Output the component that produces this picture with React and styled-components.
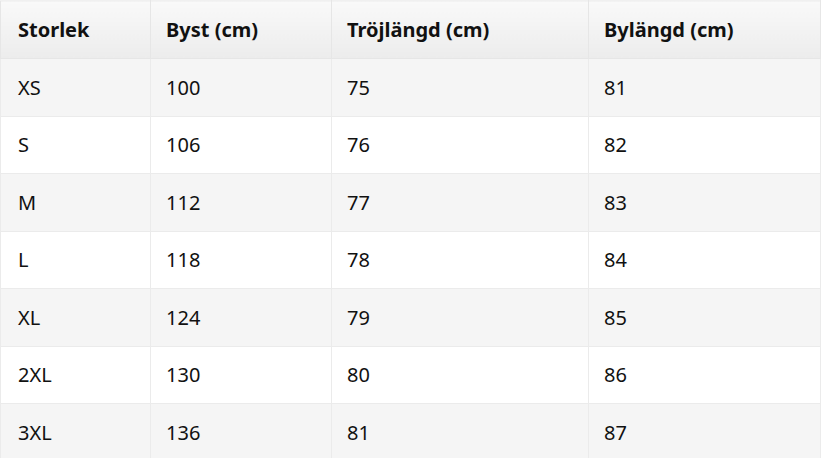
import styled, { createGlobalStyle } from "styled-components";

const GlobalStyle = createGlobalStyle`
  html, body {
    margin: 0;
    padding: 0;
    background: #ffffff;
  }
  body {
    font-family: "Noto Sans", "Open Sans", sans-serif;
    color: #111111;
  }
`;

const Table = styled.table`
  width: 100%;
  border-collapse: collapse;
  table-layout: fixed;
  font-size: 20px;
`;

const HeadCell = styled.th`
  height: 57px;
  padding: 0 15px;
  text-align: left;
  font-weight: 700;
  color: #111;
  background: linear-gradient(to bottom, #f9f9f9, #ececec);
  border: 1px solid #e6e6e6;
  border-top-color: #f0f0f0;
  &:first-child {
    padding-left: 17px;
  }
`;

const Row = styled.tr`
  background: ${({ $odd }) => ($odd ? "#f5f5f5" : "#ffffff")};
`;

const Cell = styled.td`
  height: 56.5px;
  padding: 0 15px;
  border: 1px solid #ebebeb;
  font-weight: 400;
  &:first-child {
    padding-left: 17px;
  }
`;

const sizes = [
  ["XS", 100, 75, 81],
  ["S", 106, 76, 82],
  ["M", 112, 77, 83],
  ["L", 118, 78, 84],
  ["XL", 124, 79, 85],
  ["2XL", 130, 80, 86],
  ["3XL", 136, 81, 87],
];

const App = () => {
  return (
    <>
      <GlobalStyle />
      <Table>
        <colgroup>
          <col style={{ width: 150 }} />
          <col style={{ width: 181 }} />
          <col style={{ width: 257 }} />
          <col />
        </colgroup>
        <thead>
          <tr>
            <HeadCell>Storlek</HeadCell>
            <HeadCell>Byst (cm)</HeadCell>
            <HeadCell>Tröjlängd (cm)</HeadCell>
            <HeadCell>Bylängd (cm)</HeadCell>
          </tr>
        </thead>
        <tbody>
          {sizes.map((row, i) => (
            <Row key={row[0]} $odd={i % 2 === 0}>
              {row.map((v, j) => (
                <Cell key={j}>{v}</Cell>
              ))}
            </Row>
          ))}
        </tbody>
      </Table>
    </>
  );
};

export default App;
